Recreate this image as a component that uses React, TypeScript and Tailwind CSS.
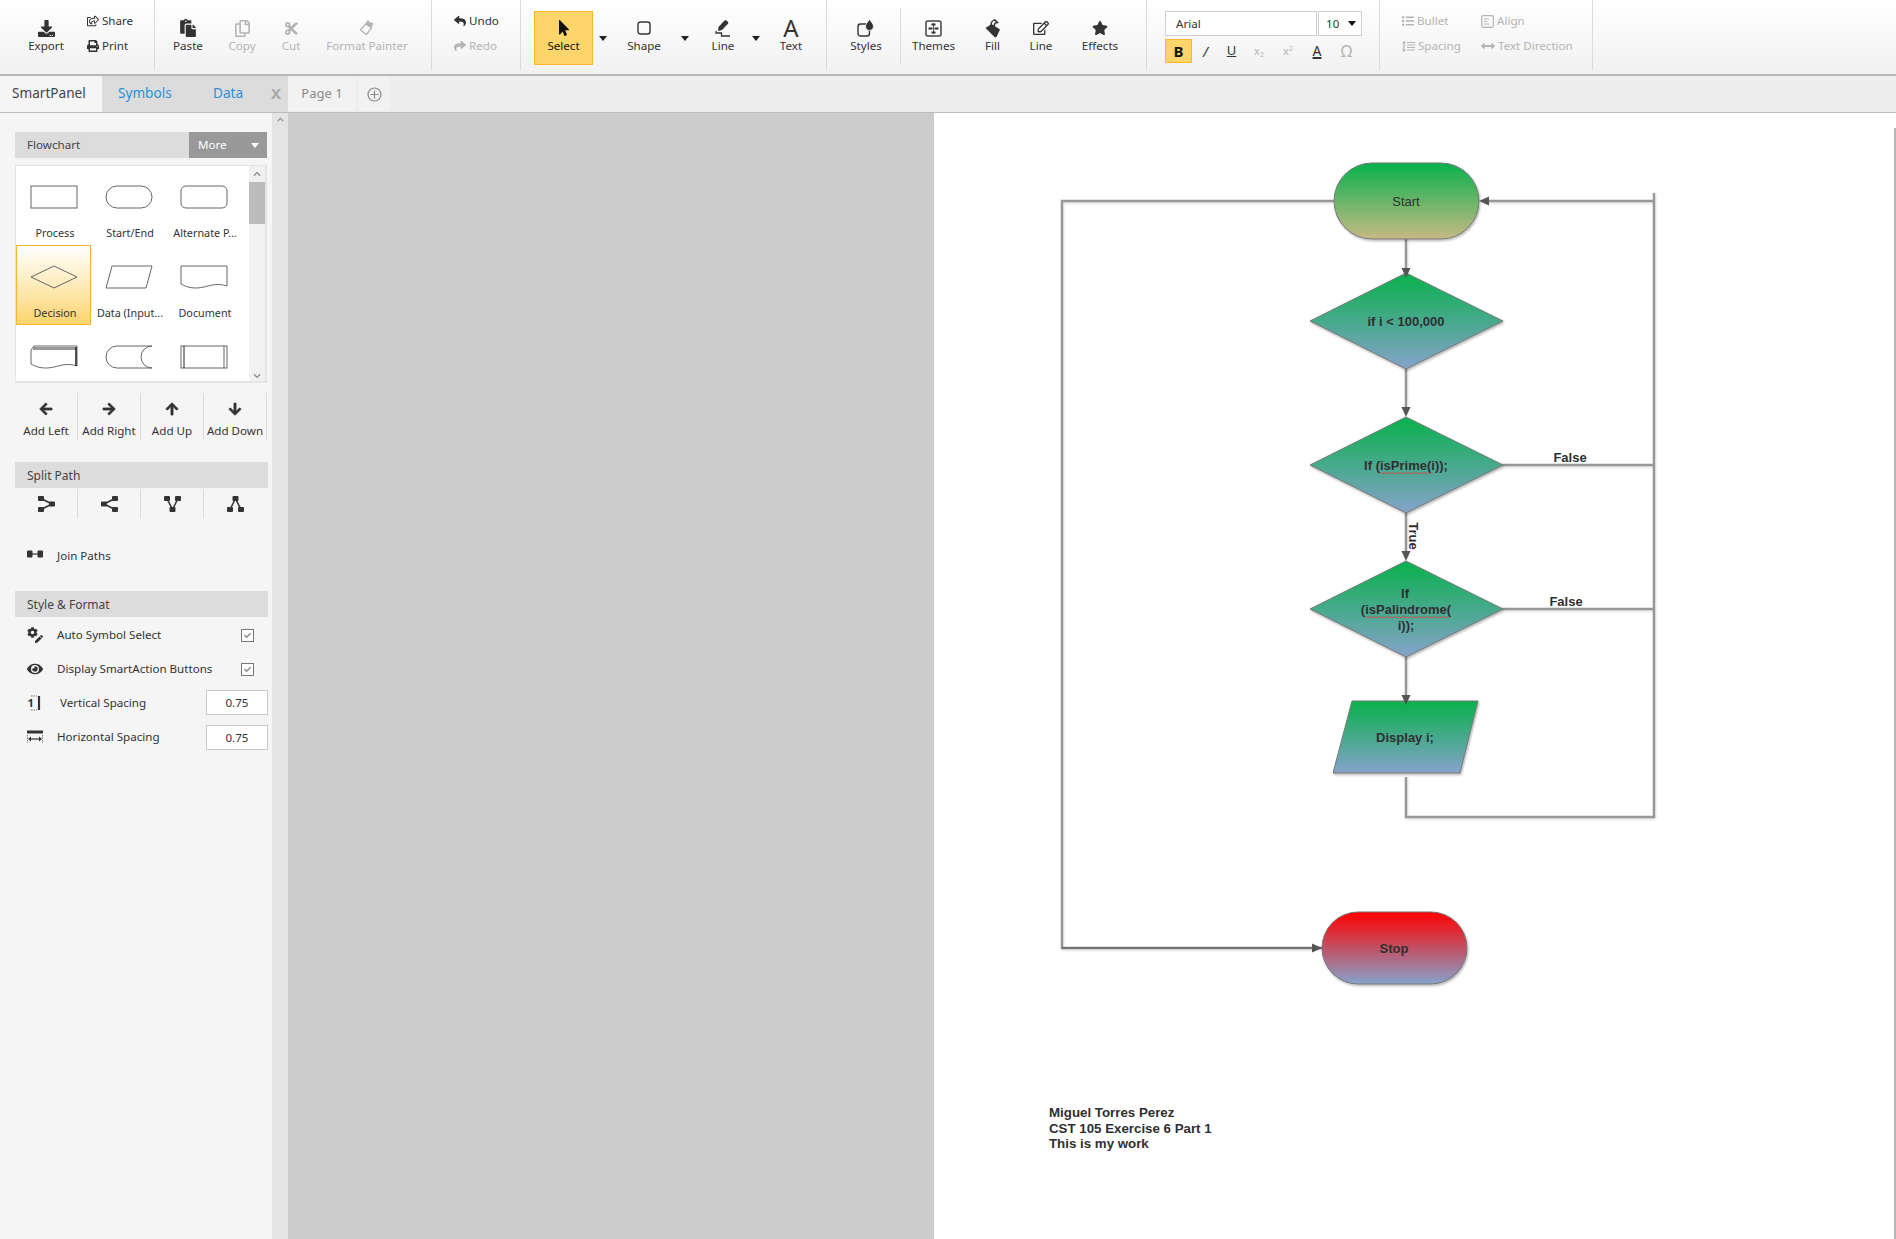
import React from "react";
import {
  FaDownload, FaRegShareSquare, FaPrint, FaPaste, FaRegCopy, FaCut, FaReply, FaShare, FaMousePointer,
  FaRegEdit, FaStar, FaList, FaArrowsAltH, FaArrowLeft, FaArrowRight, FaArrowUp, FaArrowDown, FaEye, FaCog,
  FaPen, FaChevronUp, FaChevronDown, FaCheck,
} from "react-icons/fa";

const Sep = () => <div className="w-px h-[70px] bg-[#dcdcdc] shrink-0" />;

function Tool({ label, icon, className, muted }: { label: string; icon: React.ReactNode; className: string; muted?: boolean }) {
  return (
    <div className={"flex flex-col items-center pt-[18px] shrink-0 " + className + (muted ? " text-[#b4b4b4]" : " text-[#333]")}>
      <div className="h-[20px] flex items-center justify-center">{icon}</div>
      <div className="leading-[16px] whitespace-nowrap">{label}</div>
    </div>
  );
}

function Small({ label, icon, muted }: { label: string; icon: React.ReactNode; muted?: boolean }) {
  return (
    <div className={"h-[16px] flex items-center gap-[3px] whitespace-nowrap " + (muted ? "text-[#b4b4b4]" : "text-[#333]")}>
      {icon}
      <span>{label}</span>
    </div>
  );
}

const Tri = ({ color = "#222" }: { color?: string }) => (
  <svg width="8" height="5" viewBox="0 0 8 5" className="shrink-0"><path d="M0 0H8L4 5Z" fill={color} /></svg>
);

const Caret = ({ className }: { className: string }) => (
  <div className={"flex items-center justify-center h-[76px] shrink-0 " + className}>
    <Tri />
  </div>
);

const LineToolIcon = () => (
  <svg width="16" height="18" viewBox="0 0 16 18" fill="none">
    <path d="M3.5 8 L9.5 1.5 Q10.5 0.8 11.5 1.5 L13 3 Q13.6 4 13 4.8 L7 11 L3 12 Z" fill="#333" />
    <path d="M1 12 V14 H6.5 V17 H15" stroke="#333" strokeWidth="1.3" />
  </svg>
);
const StylesIcon = () => (
  <svg width="18" height="18" viewBox="0 0 18 18" fill="none">
    <rect x="1" y="5" width="11.5" height="12" rx="2.5" stroke="#333" strokeWidth="1.4" />
    <path d="M12.5 0 C13.5 2.5 16.5 4.5 16.5 7.5 A4 4 0 0 1 8.5 7.5 C8.5 4.5 11.5 2.5 12.5 0 Z" fill="#333" stroke="#fafafa" strokeWidth="0.8" />
  </svg>
);
const ThemesIcon = () => (
  <svg width="17" height="17" viewBox="0 0 17 17" fill="none">
    <rect x="1" y="1" width="15" height="15" rx="2" stroke="#444" strokeWidth="1.5" />
    <path d="M6.5 3.5h4v2h-4zM3.5 7.5h4v2h-4zM9.5 7.5h4v2h-4zM6.5 11.5h4v2h-4z" fill="#333" />
    <path d="M8.5 3v11" stroke="#333" strokeWidth="0.8" />
  </svg>
);
const FillIcon = () => (
  <svg width="16" height="19" viewBox="0 0 16 19">
    <path d="M0.5 9 L6.5 5 L15 10.5 L11.5 18 Q10.5 18.5 9.5 18 Z" fill="#333" />
    <path d="M6 6 C6 3 8 1 10 1 L12.5 3.5 L10.2 4 L9 7" fill="none" stroke="#333" strokeWidth="1.5" />
  </svg>
);
const PainterIcon = () => (
  <svg width="16" height="18" viewBox="0 0 16 18" fill="none">
    <path d="M1.5 11 L6.5 5 L12.5 9 L7.5 15.5 Z" stroke="#b4b4b4" strokeWidth="1.3" />
    <path d="M6 5 L9 1 L10.5 3 L14.5 4 L12.5 9 Z" fill="#b4b4b4" />
  </svg>
);
const ShapeIcon = () => (
  <svg width="14" height="14" viewBox="0 0 14 14" fill="none"><rect x="1" y="1" width="12" height="12" rx="2.5" stroke="#333" strokeWidth="1.4" /></svg>
);
const AlignIcon = () => (
  <svg width="13" height="13" viewBox="0 0 13 13" fill="none">
    <rect x="0.7" y="0.7" width="11.6" height="11.6" rx="1.5" stroke="#b4b4b4" strokeWidth="1.2" />
    <path d="M3 4h5M3 6.5h3M3 9h5" stroke="#b4b4b4" strokeWidth="1.2" />
  </svg>
);
const SpacingIcon = () => (
  <svg width="13" height="13" viewBox="0 0 13 13" fill="none">
    <path d="M2 1.5V11.5" stroke="#b4b4b4" strokeWidth="1.2" />
    <path d="M0 3.5L2 1L4 3.5ZM0 9.5L2 12L4 9.5Z" fill="#b4b4b4" />
    <path d="M5 2.5h8M5 5h8M5 7.5h8M5 10h8" stroke="#b4b4b4" strokeWidth="1.2" />
  </svg>
);

const S = "#666";
const shapeIcons: React.ReactNode[] = [
  <rect x="1" y="1" width="46" height="22" fill="none" stroke={S} />,
  <rect x="1" y="1" width="46" height="22" rx="11" fill="none" stroke={S} />,
  <rect x="1" y="1" width="46" height="22" rx="5" fill="none" stroke={S} />,
  <path d="M1 12 L24 1 L47 12 L24 23 Z" fill="none" stroke={S} />,
  <path d="M1 23 L7 1 H47 L41 23 Z" fill="none" stroke={S} />,
  <path d="M1 1 H47 V21 C38 18 32 20 24 22 C15 24 8 23 1 19 Z" fill="none" stroke={S} />,
  <g><path d="M1 5 L4 1 H47 V21 C38 18 32 20 24 22 C15 24 8 23 1 19 Z" fill="none" stroke={S} /><path d="M3 2 H46 V5 H3 Z" fill="#999" /><path d="M46 2 V21" stroke="#222" strokeWidth="1.5" /></g>,
  <path d="M47 1 H12 A11 11 0 0 0 12 23 H47 A11 11 0 0 1 47 1 Z" fill="none" stroke={S} />,
  <g fill="none" stroke={S}><rect x="1" y="1" width="46" height="22" /><path d="M4 1 V23" stroke="#222" /><path d="M44 1 V23" /></g>,
];
const shapeLabels = ["Process", "Start/End", "Alternate P...", "Decision", "Data (Input...", "Document", "", "", ""];

function SplitIcon({ kind }: { kind: number }) {
  const n: number[][][] = [
    [[3, 2.5], [3, 13.5], [14, 8]],
    [[3, 8], [14, 2.5], [14, 13.5]],
    [[3, 2.5], [14, 2.5], [8.5, 13.5]],
    [[8.5, 2.5], [3, 13.5], [14, 13.5]],
  ];
  const p = n[kind];
  const hub = kind === 1 || kind === 3 ? 0 : 2;
  const others = [0, 1, 2].filter((i) => i !== hub);
  return (
    <svg width="17" height="16" viewBox="0 0 17 16" fill="#333">
      {others.map((o) => (
        <path key={o} d={`M${p[hub][0]} ${p[hub][1]} L${p[o][0]} ${p[o][1]}`} stroke="#333" strokeWidth="1.6" fill="none" />
      ))}
      {p.map((c, i) => <rect key={i} x={c[0] - 3} y={c[1] - 2.5} width="6" height="5" rx="1" />)}
    </svg>
  );
}

const Header = ({ children }: { children: React.ReactNode }) => (
  <div className="h-[26px] w-[253px] ml-[15px] bg-[#dcdcdc] pl-[12px] pt-[2px] flex items-center text-[#444] text-[12px]">{children}</div>
);

const Check = () => (
  <div className="w-[13px] h-[13px] border border-[#777] bg-white flex items-center justify-center text-[#888]"><FaCheck size={7} /></div>
);

function wave(x1: number, x2: number, y: number) {
  let d = `M${x1} ${y}`;
  let up = true;
  for (let x = x1 + 2; x <= x2; x += 2) {
    d += ` L${x} ${up ? y - 1.6 : y}`;
    up = !up;
  }
  return d;
}

const Arrow = ({ x, y, dir }: { x: number; y: number; dir: "d" | "l" | "r" }) => {
  const p = dir === "d" ? `${x},${y} ${x - 4.5},${y - 10} ${x + 4.5},${y - 10}` : dir === "l" ? `${x},${y} ${x + 10},${y - 4.5} ${x + 10},${y + 4.5}` : `${x},${y} ${x - 10},${y - 4.5} ${x - 10},${y + 4.5}`;
  return <polygon points={p} fill="#555" />;
};

function Chart() {
  const line = { stroke: "#979797", strokeWidth: 2.4, fill: "none" } as const;
  const shape = { stroke: "#777", strokeWidth: 1, filter: "url(#sh)" } as const;
  const t = { fontFamily: "'Liberation Sans', Arial, sans-serif", fontSize: 13, fill: "#2f2f33", textAnchor: "middle" as const, dominantBaseline: "central" as const };
  const dia = (top: number) => `1406,${top} 1503,${top + 48} 1406,${top + 96} 1310,${top + 48}`;
  return (
    <svg className="absolute inset-0" width="962" height="1126" viewBox="934 113 962 1126">
      <defs>
        <linearGradient id="g1" x1="0" y1="0" x2="0" y2="1"><stop offset="0" stopColor="#08b14c" /><stop offset="1" stopColor="#c8b984" /></linearGradient>
        <linearGradient id="g2" x1="0" y1="0" x2="0" y2="1"><stop offset="0" stopColor="#08b14c" /><stop offset="1" stopColor="#85a2ca" /></linearGradient>
        <linearGradient id="g3" x1="0" y1="0" x2="0" y2="1"><stop offset="0" stopColor="#ff0000" /><stop offset="1" stopColor="#85a2ca" /></linearGradient>
        <filter id="sh" x="-10%" y="-10%" width="120%" height="125%"><feDropShadow dx="1" dy="1.5" stdDeviation="1.2" floodColor="#000" floodOpacity="0.3" /></filter>
        <filter id="ls" filterUnits="userSpaceOnUse" x="934" y="113" width="962" height="1126"><feDropShadow dx="0.5" dy="1" stdDeviation="0.8" floodColor="#000" floodOpacity="0.18" /></filter>
      </defs>
      <g filter="url(#ls)">
        <path d="M1334 201 H1062 V948 H1322" {...line} />
        <path d="M1062 948 H1322" stroke="#666" strokeWidth="1.6" fill="none" />
        <path d="M1654 193 V817 H1406 V777" {...line} />
        <path d="M1654 201 H1485" {...line} />
        <path d="M1502 465 H1654 M1502 609 H1654" {...line} />
        <path d="M1406 239 V268 M1406 369 V410 M1406 513 V555 M1406 657 V695" {...line} />
      </g>

      <rect x="1334" y="163" width="145" height="76" rx="38" fill="url(#g1)" {...shape} />
      <polygon points={dia(273)} fill="url(#g2)" {...shape} />
      <polygon points={dia(417)} fill="url(#g2)" {...shape} />
      <polygon points={dia(561)} fill="url(#g2)" {...shape} />
      <polygon points="1352,701 1478,701 1460,773 1333,773" fill="url(#g2)" {...shape} />
      <rect x="1322" y="912" width="145" height="72" rx="36" fill="url(#g3)" {...shape} />

      <Arrow x={1479} y={201} dir="l" />
      <Arrow x={1406} y={278} dir="d" />
      <Arrow x={1406} y={417} dir="d" />
      <Arrow x={1406} y={561} dir="d" />
      <Arrow x={1406} y={705} dir="d" />
      <Arrow x={1322} y={948} dir="r" />

      <text x="1406" y="201" {...t}>Start</text>
      <text x="1406" y="321" {...t} fontWeight="700">if i &lt; 100,000</text>
      <text x="1406" y="465" {...t} fontWeight="700">If (isPrime(i));</text>
      <path d={wave(1379, 1431, 474)} stroke="#e04040" strokeWidth="0.8" fill="none" />
      <text x="1405" y="593" {...t} fontWeight="700">If</text>
      <text x="1406" y="609" {...t} fontWeight="700">(isPalindrome(</text>
      <text x="1406" y="625" {...t} fontWeight="700">i));</text>
      <path d={wave(1365, 1450, 618)} stroke="#e04040" strokeWidth="0.8" fill="none" />
      <text x="1405" y="737" {...t} fontWeight="700">Display i;</text>
      <text x="1394" y="948" {...t} fontWeight="700">Stop</text>
      <text x="1570" y="457" {...t} fontWeight="700">False</text>
      <text x="1566" y="601" {...t} fontWeight="700">False</text>
      <text x="1413" y="536" {...t} fontWeight="700" transform="rotate(90 1413 536)">True</text>
      <g fontFamily="'Liberation Sans', Arial, sans-serif" fontSize="13.3" fontWeight="700" fill="#2f2f33">
        <text x="1049" y="1117">Miguel Torres Perez</text>
        <text x="1049" y="1133">CST 105 Exercise 6 Part 1</text>
        <text x="1049" y="1148">This is my work</text>
      </g>
    </svg>
  );
}

const Bold = "stroke-[24px]";

export default function App() {
  return (
    <div className="w-[1896px] h-[1239px] overflow-hidden bg-white flex flex-col text-[11.6px] text-[#333] [font-family:'Noto_Sans',sans-serif]">
      {/* Ribbon */}
      <div className="h-[76px] shrink-0 flex items-start border-b-2 border-[#b8b8b8] bg-gradient-to-b from-white to-[#f1f1f1]">
        <div className="w-[154px] shrink-0 flex">
          <Tool className="w-[92px]" label="Export" icon={<FaDownload size={17} />} />
          <div className="flex flex-col gap-[9px] pt-[13px] -ml-[5px]">
            <Small label="Share" icon={<FaRegShareSquare size={12} />} />
            <Small label="Print" icon={<FaPrint size={12} />} />
          </div>
        </div>
        <Sep />
        <div className="w-[276px] shrink-0 flex">
          <Tool className="w-[66px]" label="Paste" icon={<FaPaste size={18} />} />
          <Tool className="w-[42px]" muted label="Copy" icon={<FaRegCopy size={17} />} />
          <Tool className="w-[56px]" muted label="Cut" icon={<FaCut size={15} />} />
          <Tool className="w-[96px]" muted label="Format Painter" icon={<PainterIcon />} />
        </div>
        <Sep />
        <div className="w-[88px] shrink-0 flex flex-col gap-[9px] pt-[13px] pl-[22px]">
          <Small label="Undo" icon={<FaReply size={12} />} />
          <Small muted label="Redo" icon={<FaShare size={12} />} />
        </div>
        <Sep />
        <div className="w-[305px] shrink-0 flex items-start">
          <div className="ml-[13px] mt-[11px] w-[59px] h-[54px] shrink-0 bg-[#fdd56b] border border-[#f9b72d] flex flex-col items-center pt-[6px]">
            <div className="h-[20px] flex items-center"><FaMousePointer size={16} className="text-[#111]" /></div>
            <div className="leading-[16px] text-[#111]">Select</div>
          </div>
          <Caret className="w-[20px]" />
          <Tool className="w-[62px]" label="Shape" icon={<ShapeIcon />} />
          <Caret className="w-[20px]" />
          <Tool className="w-[56px]" label="Line" icon={<LineToolIcon />} />
          <Caret className="w-[10px]" />
          <Tool className="w-[60px]" label="Text" icon={<span className="text-[24px] leading-[20px] text-[#333]">A</span>} />
        </div>
        <Sep />
        <div className="w-[73px] shrink-0 flex">
          <Tool className="w-[78px]" label="Styles" icon={<StylesIcon />} />
        </div>
        <div className="w-px h-[56px] mt-[8px] bg-[#dcdcdc] shrink-0" />
        <div className="w-[245px] shrink-0 flex">
          <Tool className="w-[65px]" label="Themes" icon={<ThemesIcon />} />
          <Tool className="w-[53px]" label="Fill" icon={<FillIcon />} />
          <Tool className="w-[44px]" label="Line" icon={<FaRegEdit size={16} />} />
          <Tool className="w-[74px]" label="Effects" icon={<FaStar size={16} />} />
        </div>
        <Sep />
        <div className="w-[232px] shrink-0 pl-[18px] pt-[11px]">
          <div className="flex gap-px">
            <div className="w-[152px] h-[25px] bg-white border border-[#cfcfcf] pl-[10px] flex items-center">Arial</div>
            <div className="w-[44px] h-[25px] bg-white border border-[#cfcfcf] pl-[7px] pr-[5px] flex items-center justify-between">10<Tri color="#111" /></div>
          </div>
          <div className="flex items-center mt-[3px] h-[24px]">
            <div className="w-[27px] h-[24px] bg-[#fdd56b] border border-[#f9b72d] flex items-center justify-center font-bold text-[15px] text-[#111]">B</div>
            <div className="w-[27px] text-center text-[14px] italic">/</div>
            <div className="w-[25px] text-center text-[13px] underline">U</div>
            <div className="w-[30px] text-center text-[#b4b4b4] text-[11px]">x<sub className="text-[7px]">2</sub></div>
            <div className="w-[28px] text-center text-[#b4b4b4] text-[11px]">x<sup className="text-[7px]">2</sup></div>
            <div className="w-[30px] text-center text-[14px] leading-[16px] underline decoration-2">A</div>
            <div className="w-[29px] text-center text-[#b4b4b4] text-[16px] leading-[20px]">Ω</div>
          </div>
        </div>
        <Sep />
        <div className="w-[212px] shrink-0 flex pl-[22px]">
          <div className="w-[79px] flex flex-col gap-[9px] pt-[13px]">
            <Small muted label="Bullet" icon={<FaList size={12} />} />
            <Small muted label="Spacing" icon={<SpacingIcon />} />
          </div>
          <div className="flex flex-col gap-[9px] pt-[13px]">
            <Small muted label="Align" icon={<AlignIcon />} />
            <Small muted label="Text Direction" icon={<FaArrowsAltH size={14} />} />
          </div>
        </div>
        <Sep />
      </div>

      {/* Tab strip */}
      <div className="h-[37px] shrink-0 flex border-b border-[#bcbcbc] bg-[#ededed]">
        <div className="w-[288px] shrink-0 flex bg-[#dcdcdc] text-[13.6px] pb-[2px]">
          <div className="w-[102px] -mb-[2px] pb-[2px] bg-[#f5f5f5] flex items-center pl-[12px] text-[#444]">SmartPanel</div>
          <div className="w-[111px] flex items-center pl-[16px] text-[#2e8fd6]">Symbols</div>
          <div className="w-[58px] flex items-center text-[#2e8fd6]">Data</div>
          <div className="flex items-center font-bold text-[#a9a9a9] text-[15px]">X</div>
        </div>
        <div className="w-[68px] mt-[1px] mb-px bg-[#f2f2f2] flex items-center justify-center text-[#8a8a8a] text-[13px]">Page 1</div>
        <div className="w-[32px] mt-[1px] mb-px ml-[2px] bg-[#f2f2f2] flex items-center justify-center">
          <svg width="15" height="15" viewBox="0 0 15 15" fill="none" stroke="#888" strokeWidth="1.2"><circle cx="7.5" cy="7.5" r="6.5" /><path d="M7.5 3.5v8M3.5 7.5h8" /></svg>
        </div>
      </div>

      {/* Work area */}
      <div className="flex-1 flex min-h-0">
        <div className="w-[272px] shrink-0 bg-[#f5f5f5] pt-[19px]">
          <div className="ml-[15px] w-[252px] h-[26px] bg-[#dcdcdc] flex items-center text-[#444]">
            <div className="flex-1 pl-[12px]">Flowchart</div>
            <div className="w-[78px] h-full bg-[#999] text-white flex items-center justify-between pl-[9px] pr-[8px]">More<Tri color="#fff" /></div>
          </div>
          <div className="ml-[15px] mt-[7px] w-[252px] h-[218px] bg-white border-b-2 border-r-2 border-[#e4e4e4] border-l border-t flex justify-between overflow-hidden">
            <div className="w-[225px] grid grid-cols-3 auto-rows-[80px] shrink-0 -mt-px">
              {shapeIcons.map((ic, i) => (
                <div key={i} className={"flex flex-col items-center text-[10.8px] text-[#333] " + (i === 3 ? "pt-[19px] border border-[#f9b72d] bg-gradient-to-b from-white to-[#fdd56b]" : "pt-[20px]")}>
                  <svg width="48" height="24" viewBox="0 0 48 24" className="shrink-0">{ic}</svg>
                  <div className="mt-[17px] leading-[14px] whitespace-nowrap pl-[3px]">{shapeLabels[i]}</div>
                </div>
              ))}
            </div>
            <div className="w-[16px] h-[218px] bg-[#f1f1f1] flex flex-col items-center justify-between pb-[4px] text-[#888]">
              <div className="w-full flex flex-col items-center">
                <div className="h-[16px] flex items-center"><FaChevronUp size={8} /></div>
                <div className="w-full h-[42px] bg-[#bbb]" />
              </div>
              <FaChevronDown size={8} />
            </div>
          </div>

          <div className="ml-[15px] mt-[10px] flex h-[47px]">
            {[
              { l: "Add Left", i: <FaArrowLeft size={14} className={Bold} stroke="currentColor" /> },
              { l: "Add Right", i: <FaArrowRight size={14} className={Bold} stroke="currentColor" /> },
              { l: "Add Up", i: <FaArrowUp size={14} className={Bold} stroke="currentColor" /> },
              { l: "Add Down", i: <FaArrowDown size={14} className={Bold} stroke="currentColor" /> },
            ].map((b) => (
              <div key={b.l} className="w-[63px] border-r border-[#dcdcdc] flex flex-col items-center pt-[8px] text-[#333]">
                <div className="h-[16px] flex items-center">{b.i}</div>
                <div className="mt-[6px] leading-[16px] whitespace-nowrap">{b.l}</div>
              </div>
            ))}
          </div>

          <div className="mt-[22px]"><Header>Split Path</Header></div>
          <div className="ml-[15px] flex h-[29px] mt-[1px]">
            {[0, 1, 2, 3].map((k) => (
              <div key={k} className="w-[63px] border-r border-[#dcdcdc] last:border-r-0 flex items-center justify-center"><SplitIcon kind={k} /></div>
            ))}
          </div>

          <div className="ml-[27px] mt-[28px] h-[20px] flex items-center">
            <svg width="16" height="8" viewBox="0 0 16 8" className="-mt-[4px]" fill="#333"><rect x="0" y="0.5" width="5.5" height="7" rx="1" /><rect x="10.5" y="0.5" width="5.5" height="7" rx="1" /><path d="M5 3.4h6v1.2H5z" /></svg>
            <span className="ml-[14px]">Join Paths</span>
          </div>

          <div className="mt-[25px]"><Header>Style &amp; Format</Header></div>
          <div className="ml-[27px] mt-[8px] w-[227px] h-[20px] flex items-center">
            <div className="w-[30px] flex"><div className="relative w-[16px] h-[16px]"><FaCog size={11} className="absolute left-0 top-0" /><FaPen size={8} className="absolute right-0 bottom-0" /></div></div>
            <span className="flex-1">Auto Symbol Select</span><Check />
          </div>
          <div className="ml-[27px] mt-[14px] w-[227px] h-[20px] flex items-center">
            <div className="w-[30px] flex"><FaEye size={16} /></div>
            <span className="flex-1">Display SmartAction Buttons</span><Check />
          </div>
          <div className="ml-[27px] mt-[11px] w-[241px] h-[25px] flex items-center">
            <svg width="14" height="16" viewBox="0 0 14 16" className="mr-[19px] shrink-0">
              <text x="0.5" y="12" fontSize="11" fontWeight="700" fill="#333">1</text>
              <path d="M12 1v14" stroke="#333" strokeWidth="2.2" />
              <path d="M4 1h6M4 15h6" stroke="#777" strokeWidth="1" strokeDasharray="1.5 1" />
            </svg>
            <span className="flex-1">Vertical Spacing</span>
            <div className="w-[62px] h-[25px] bg-white border border-[#c9c9c9] flex items-center justify-center">0.75</div>
          </div>
          <div className="ml-[27px] mt-[10px] w-[241px] h-[25px] flex items-center">
            <svg width="16" height="13" viewBox="0 0 16 13" className="mr-[14px] -mt-[3px] shrink-0">
              <path d="M0 2h16" stroke="#333" strokeWidth="3" />
              <path d="M2 9h12" stroke="#333" strokeWidth="1.2" />
              <path d="M1 9L4 6.5V11.5ZM15 9L12 6.5V11.5Z" fill="#333" />
              <path d="M0.5 5v8M15.5 5v8" stroke="#777" strokeWidth="1" strokeDasharray="1.5 1" />
            </svg>
            <span className="flex-1 -mt-[2px]">Horizontal Spacing</span>
            <div className="w-[62px] h-[25px] bg-white border border-[#c9c9c9] flex items-center justify-center">0.75</div>
          </div>
        </div>

        <div className="w-[16px] shrink-0 bg-[#e4e4e4] flex justify-center pt-[3px] text-[#888]"><FaChevronUp size={7} /></div>
        <div className="w-[646px] shrink-0 bg-[#cccccc]" />
        <div className="flex-1 relative bg-white">
          <Chart />
          <div className="absolute right-0 top-[15px] bottom-0 w-[2px] bg-[#b5b5b5]" />
        </div>
      </div>
    </div>
  );
}
